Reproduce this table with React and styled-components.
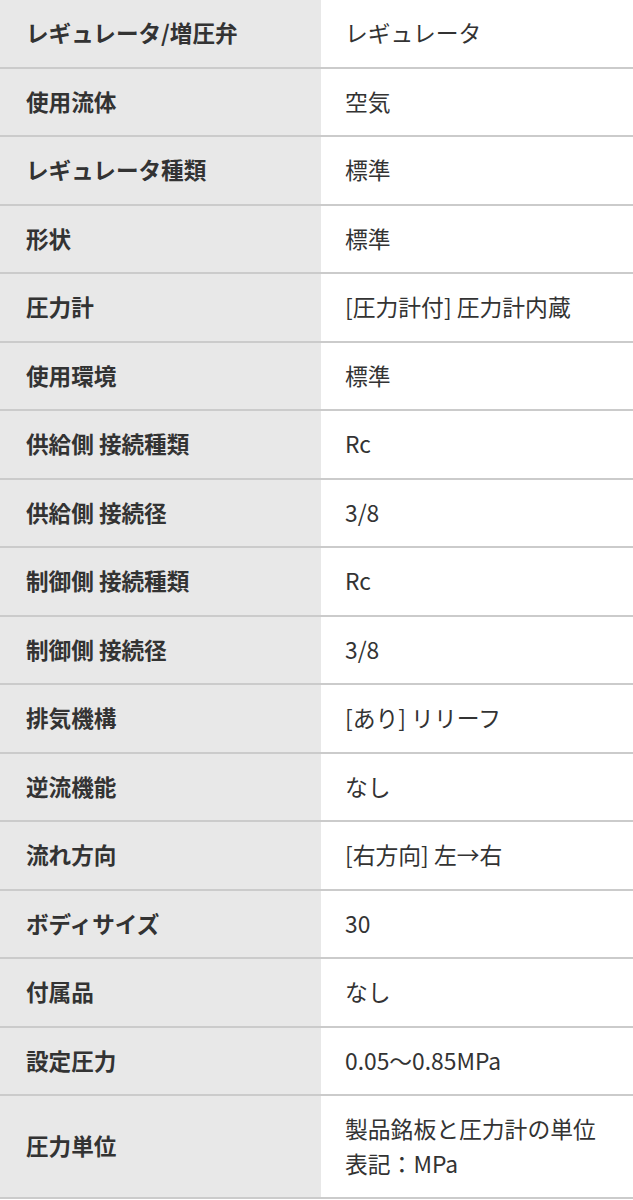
import React from "react";
import styled, { createGlobalStyle } from "styled-components";

const Global = createGlobalStyle`
  html, body {
    margin: 0;
    padding: 0;
    background: #ffffff;
  }
  body {
    font-family: "Noto Sans CJK JP", "Noto Sans", sans-serif;
    color: #333333;
  }
`;

const Table = styled.div`
  width: 633px;
  display: grid;
  grid-template-columns: 321px 1fr;
`;

const Label = styled.div`
  background: #e8e8e8;
  border-bottom: 2px solid #cbcbcb;
  padding: 16px 20px 16px 26px;
  font-size: 22.6px;
  font-weight: 700;
  line-height: 34.5px;
  display: flex;
  align-items: center;
`;

const Value = styled.div`
  background: #ffffff;
  border-bottom: 2px solid #cbcbcb;
  padding: 16px 26px 16px 24px;
  font-size: 22.8px;
  font-weight: 400;
  line-height: 34.5px;
  display: flex;
  align-items: center;
`;

const rows = [
  ["レギュレータ/増圧弁", "レギュレータ"],
  ["使用流体", "空気"],
  ["レギュレータ種類", "標準"],
  ["形状", "標準"],
  ["圧力計", "[圧力計付] 圧力計内蔵"],
  ["使用環境", "標準"],
  ["供給側 接続種類", "Rc"],
  ["供給側 接続径", "3/8"],
  ["制御側 接続種類", "Rc"],
  ["制御側 接続径", "3/8"],
  ["排気機構", "[あり] リリーフ"],
  ["逆流機能", "なし"],
  ["流れ方向", "[右方向] 左→右"],
  ["ボディサイズ", "30"],
  ["付属品", "なし"],
  ["設定圧力", "0.05〜0.85MPa"],
  ["圧力単位", "製品銘板と圧力計の単位表記：MPa"],
];

export default function App() {
  return (
    <>
      <Global />
      <Table>
        {rows.map(([k, v]) => (
          <React.Fragment key={k}>
            <Label>{k}</Label>
            <Value>{v}</Value>
          </React.Fragment>
        ))}
      </Table>
    </>
  );
}
